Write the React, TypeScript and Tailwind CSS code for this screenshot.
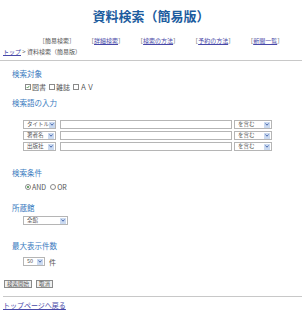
import React from "react";

const F = { fontFamily: '"Noto Sans CJK JP", "Noto Sans", sans-serif' };

function Sel({ label, w }: { label: string; w: string }) {
  return (
    <div className={`flex h-[9px] items-center justify-between overflow-hidden border border-[#b5b5b5] bg-white pl-[3px] pr-[1px] ${w}`}>
      <span className="whitespace-nowrap text-[5.5px] leading-[7px] text-[#555]">{label}</span>
      <span className="flex h-[6px] w-[6px] shrink-0 items-center justify-center bg-[#cbdaf0]">
        <svg width="4" height="3" viewBox="0 0 4 3">
          <path d="M0.5 0.5 L2 2.2 L3.5 0.5" stroke="#3b5fa8" strokeWidth="0.9" fill="none" />
        </svg>
      </span>
    </div>
  );
}

function Box({ checked }: { checked?: boolean }) {
  return (
    <span className="mr-[1px] inline-flex h-[6px] w-[6px] items-center justify-center border border-[#8a8a8a] bg-white">
      {checked && (
        <svg width="4" height="4" viewBox="0 0 4 4">
          <path d="M0.6 2 L1.6 3 L3.4 0.8" stroke="#3a8a3a" strokeWidth="0.8" fill="none" />
        </svg>
      )}
    </span>
  );
}

function Radio({ checked }: { checked?: boolean }) {
  return (
    <span className="mr-[1px] inline-flex h-[6px] w-[6px] items-center justify-center rounded-full border border-[#8a8a8a] bg-white">
      {checked && <span className="h-[2px] w-[2px] rounded-full bg-[#3a8a3a]" />}
    </span>
  );
}

function Heading({ children, mt }: { children: React.ReactNode; mt: string }) {
  return <div className={`${mt} pl-[12px] text-[7.5px] leading-[9px] text-[#3a7bc0]`}>{children}</div>;
}

export default function App() {
  const navLink = "text-[#4848a8] underline";
  return (
    <div className="h-[320px] w-[302px] bg-white text-[6px] text-[#555]" style={F}>
      <div className="pt-[9px] text-center text-[13px] font-bold leading-[14px] text-[#1c5c9e]">資料検索（簡易版）</div>
      <div className="mt-[14px] flex gap-[13px] pl-[39px] text-[6px] leading-[8px] text-[#555]">
        <span>［簡易検索］</span>
        <span>［<span className={navLink}>詳細検索</span>］</span>
        <span>［<span className={navLink}>検索の方法</span>］</span>
        <span>［<span className={navLink}>予約の方法</span>］</span>
        <span>［<span className={navLink}>新聞一覧</span>］</span>
      </div>
      <div className="mt-[3px] pl-[3px] text-[6px] leading-[8px]">
        <span className={navLink}>トップ</span> &gt; 資料検索（簡易版）
      </div>
      <div className="mt-[4px] border-t border-[#c8c8c8]" />

      <Heading mt="mt-[8px]">検索対象</Heading>
      <div className="mt-[5px] flex items-center pl-[25px] text-[7px] leading-[8px]">
        <Box checked />
        <span>図書</span>
        <span className="ml-[3px]" />
        <Box />
        <span>雑誌</span>
        <span className="ml-[3px]" />
        <Box />
        <span>ＡＶ</span>
      </div>

      <Heading mt="mt-[7px]">検索語の入力</Heading>
      <div className="mt-[13px] flex flex-col gap-[2px] pl-[23px]">
        {["タイトル", "著者名", "出版社"].map((l) => (
          <div key={l} className="flex items-center">
            <Sel label={l} w="w-[33px]" />
            <div className="ml-[4px] h-[9px] w-[172px] border border-[#b5b5b5] bg-white" />
            <div className="ml-[2px]">
              <Sel label="を含む" w="w-[38px]" />
            </div>
          </div>
        ))}
      </div>

      <Heading mt="mt-[17px]">検索条件</Heading>
      <div className="mt-[6px] flex items-center pl-[25px] text-[7px] leading-[8px]">
        <Radio checked />
        <span>AND</span>
        <span className="ml-[4px]" />
        <Radio />
        <span>OR</span>
      </div>

      <Heading mt="mt-[12px]">所蔵館</Heading>
      <div className="mt-[4px] pl-[23px]">
        <Sel label="全館" w="w-[45px]" />
      </div>

      <Heading mt="mt-[16px]">最大表示件数</Heading>
      <div className="mt-[7px] flex items-center pl-[23px]">
        <Sel label="50" w="w-[22px]" />
        <span className="ml-[4px] text-[7px] leading-[8px]">件</span>
      </div>

      <div className="mt-[14px] flex gap-[4px] pl-[4px]">
        <div className="flex h-[8px] items-center border border-[#8a8a8a] bg-[#f0f0f0] px-[2px] text-[5.5px] leading-[6px]">検索開始</div>
        <div className="flex h-[8px] items-center border border-[#8a8a8a] bg-[#f0f0f0] px-[2px] text-[5.5px] leading-[6px]">取消</div>
      </div>
      <div className="mt-[8px] ml-[3px] border-t border-[#c8c8c8]" />
      <div className="mt-[4px] pl-[3px] leading-[8px]">
        <span className="text-[7px] text-[#4848a8] underline">トップページへ戻る</span>
      </div>
    </div>
  );
}
